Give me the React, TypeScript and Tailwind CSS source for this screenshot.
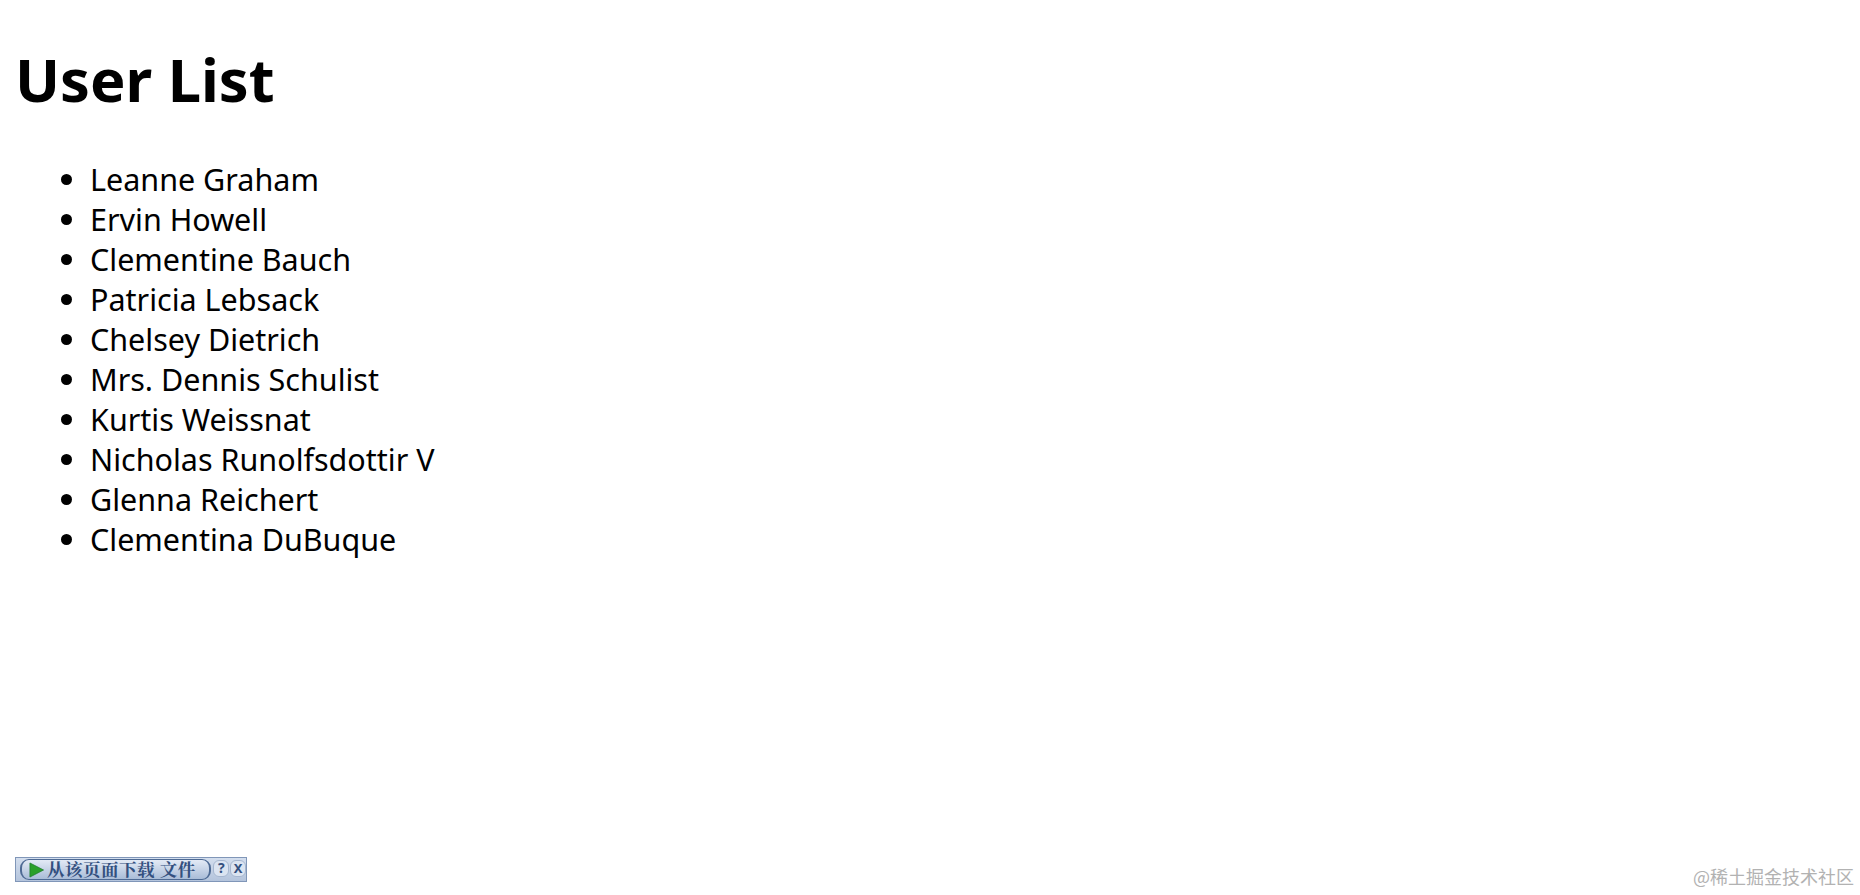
const users = ["Leanne Graham","Ervin Howell","Clementine Bauch","Patricia Lebsack","Chelsey Dietrich","Mrs. Dennis Schulist","Kurtis Weissnat","Nicholas Runolfsdottir V","Glenna Reichert","Clementina DuBuque"];

export default function App() {
  return (
    <div className="relative h-[895px] w-full overflow-hidden bg-white pl-4 pt-[37px] font-['Noto_Sans','Noto_Sans_CJK_SC',sans-serif] text-black">
      <h1 className="-ml-[1px] text-[59.6px] font-bold leading-[84px]">User List</h1>
      <ul className="mt-[38px] list-disc pl-[74px] text-[30.5px] leading-[40px]">
        {users.map((u) => <li key={u}>{u}</li>)}
      </ul>
      <div className="absolute bottom-[13px] left-[15px] flex h-[25px] w-[232px] items-center border border-[#8096b8] bg-[linear-gradient(#d3deee,#b4c4dc)] pl-[4px]">
        <div className="flex h-[21px] w-[194px] items-center gap-[3px] rounded-[9px] border border-x-2 border-[#4e6a94] bg-[linear-gradient(#e3eaf5,#a9bcd8)] pl-[7px] font-['Noto_Serif_CJK_SC','Noto_Sans_CJK_SC',serif] text-[17.5px] font-bold leading-none tracking-[0.5px] text-[#33507f]">
          <svg viewBox="0 0 16 16" className="h-[16px] w-[15px] shrink-0"><path d="M1 0.5 15.5 8 1 15.5Z" fill="#2aa02a" stroke="#1c7a2c" strokeWidth="0.8" /></svg>
          <span className="-mt-[1px] whitespace-nowrap">从该页面下载 文件</span>
        </div>
        <span className="ml-[2px] -mt-[3px] flex h-[17px] w-[16px] items-center justify-center rounded-[6px] border border-[#a6b7d0] bg-[#dbe4f1] text-[14px] font-bold leading-none text-[#33507f]">?</span>
        <span className="ml-[1px] -mt-[3px] flex h-[17px] w-[16px] items-center justify-center rounded-[6px] border border-[#a6b7d0] bg-[#dbe4f1] text-[13px] font-bold leading-none text-[#33507f]">X</span>
      </div>
      <div className="absolute bottom-[7px] right-[6px] whitespace-nowrap font-['Noto_Sans_CJK_SC',sans-serif] text-[18px] leading-[24px] text-[#b2b2b2]">@稀土掘金技术社区</div>
    </div>
  );
}
